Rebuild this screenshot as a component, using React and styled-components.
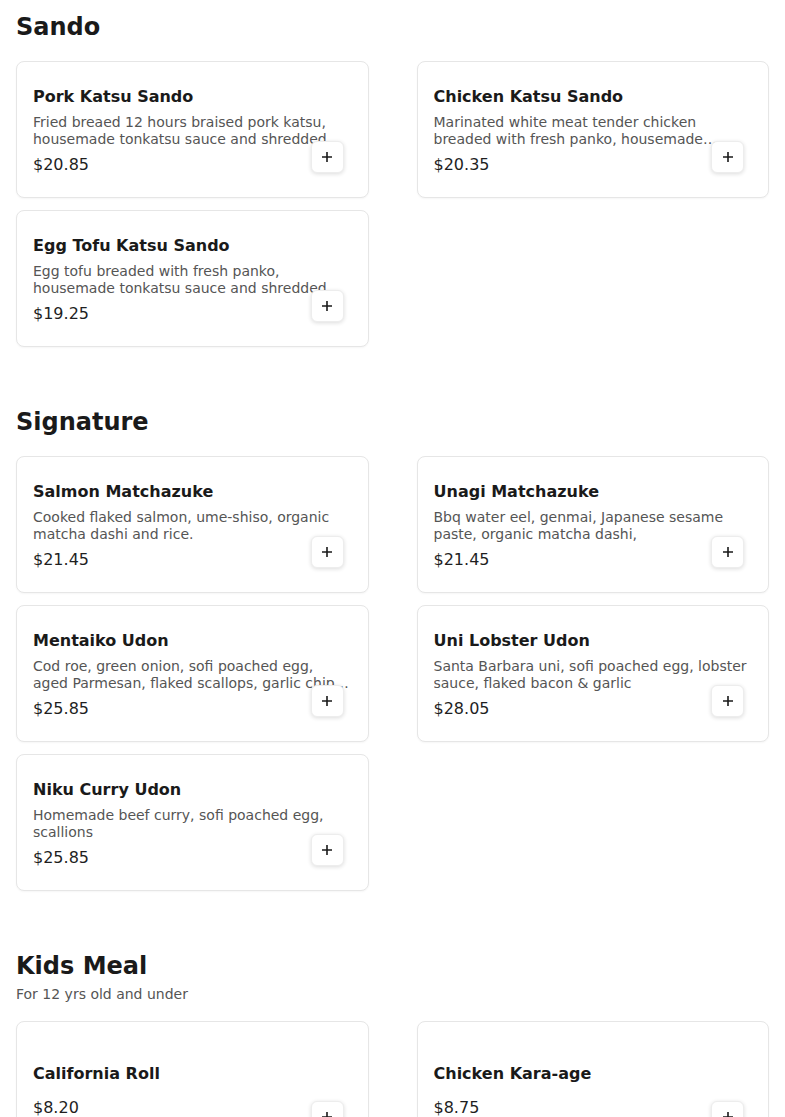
import React from 'react';
import styled, { createGlobalStyle } from 'styled-components';

const GlobalStyle = createGlobalStyle`
  body {
    margin: 0;
    background: #ffffff;
    font-family: 'DejaVu Sans', 'Liberation Sans', sans-serif;
    color: #1a1a1a;
  }
  * { box-sizing: border-box; }
`;

const Page = styled.main`
  padding: 12px 16px 0;
`;

const Section = styled.section`
  margin-bottom: 60px;
`;

const SectionHeader = styled.header`
  display: flex;
  flex-direction: column;
  margin-bottom: ${(p) => (p.$sub ? '18px' : '19px')};
`;

const SectionTitle = styled.h2`
  margin: 0;
  font-size: 24px;
  line-height: 30px;
  font-weight: 700;
  color: #1a1a1a;
`;

const SectionSub = styled.p`
  margin: 5px 0 0;
  font-size: 14px;
  line-height: 17px;
  color: #555;
`;

const Grid = styled.div`
  display: grid;
  grid-template-columns: 1fr 1fr;
  column-gap: 48px;
  row-gap: 12px;
`;

const Card = styled.div`
  position: relative;
  height: 137px;
  display: flex;
  flex-direction: column;
  justify-content: center;
  gap: 6px;
  padding: 0 16px;
  border: 1px solid #e6e6e6;
  border-radius: 8px;
  background: #fff;
  box-shadow: 0 1px 2px rgba(0, 0, 0, 0.04);
`;

const ItemName = styled.h3`
  margin: 0;
  font-size: 16px;
  line-height: 23px;
  font-weight: 700;
  color: #1a1a1a;
`;

const ItemDesc = styled.p`
  margin: 0;
  font-size: 14px;
  line-height: 17px;
  color: #555;
  display: -webkit-box;
  -webkit-line-clamp: 2;
  -webkit-box-orient: vertical;
  overflow: hidden;
`;

const Price = styled.span`
  font-size: 16px;
  line-height: 21px;
  color: #1f1f1f;
`;

const AddButton = styled.button`
  position: absolute;
  right: 24px;
  bottom: 24px;
  width: 33px;
  height: 32px;
  display: flex;
  align-items: center;
  justify-content: center;
  padding: 0;
  border: 1px solid #ededed;
  border-radius: 6px;
  background: #fff;
  box-shadow: 0 1px 4px rgba(0, 0, 0, 0.14);
  cursor: pointer;
`;

const PlusIcon = () => (
  <svg width="12" height="12" viewBox="0 0 12 12">
    <path d="M6 1v10M1 6h10" stroke="#1a1a1a" strokeWidth="1.6" fill="none" />
  </svg>
);

const menu = [
  {
    title: 'Sando',
    items: [
      {
        name: 'Pork Katsu Sando',
        desc: 'Fried breaed 12 hours braised pork katsu, housemade tonkatsu sauce and shredded cabbage on milk bread.',
        price: '$20.85',
      },
      {
        name: 'Chicken Katsu Sando',
        desc: 'Marinated white meat tender chicken breaded with fresh panko, housemade tonkatsu sauce and shredded cabbage.',
        price: '$20.35',
      },
      {
        name: 'Egg Tofu Katsu Sando',
        desc: 'Egg tofu breaded with fresh panko, housemade tonkatsu sauce and shredded cabbage on milk bread.',
        price: '$19.25',
      },
    ],
  },
  {
    title: 'Signature',
    items: [
      {
        name: 'Salmon Matchazuke',
        desc: 'Cooked flaked salmon, ume-shiso, organic matcha dashi and rice.',
        price: '$21.45',
      },
      {
        name: 'Unagi Matchazuke',
        desc: 'Bbq water eel, genmai, Japanese sesame paste, organic matcha dashi,',
        price: '$21.45',
      },
      {
        name: 'Mentaiko Udon',
        desc: 'Cod roe, green onion, sofi poached egg, aged Parmesan, flaked scallops, garlic chip and nori.',
        price: '$25.85',
      },
      {
        name: 'Uni Lobster Udon',
        desc: 'Santa Barbara uni, sofi poached egg, lobster sauce, flaked bacon & garlic',
        price: '$28.05',
      },
      {
        name: 'Niku Curry Udon',
        desc: 'Homemade beef curry, sofi poached egg, scallions',
        price: '$25.85',
      },
    ],
  },
  {
    title: 'Kids Meal',
    sub: 'For 12 yrs old and under',
    items: [
      { name: 'California Roll', desc: '', price: '$8.20' },
      { name: 'Chicken Kara-age', desc: '', price: '$8.75' },
    ],
  },
];

function MenuCard({ name, desc, price }) {
  return (
    <Card>
      <ItemName>{name}</ItemName>
      <ItemDesc>{desc}</ItemDesc>
      <Price>{price}</Price>
      <AddButton aria-label={`Add ${name}`}>
        <PlusIcon />
      </AddButton>
    </Card>
  );
}

export default function App() {
  return (
    <>
      <GlobalStyle />
      <Page>
        {menu.map((section) => (
          <Section key={section.title}>
            <SectionHeader $sub={!!section.sub}>
              <SectionTitle>{section.title}</SectionTitle>
              {section.sub && <SectionSub>{section.sub}</SectionSub>}
            </SectionHeader>
            <Grid>
              {section.items.map((item) => (
                <MenuCard key={item.name} {...item} />
              ))}
            </Grid>
          </Section>
        ))}
      </Page>
    </>
  );
}
